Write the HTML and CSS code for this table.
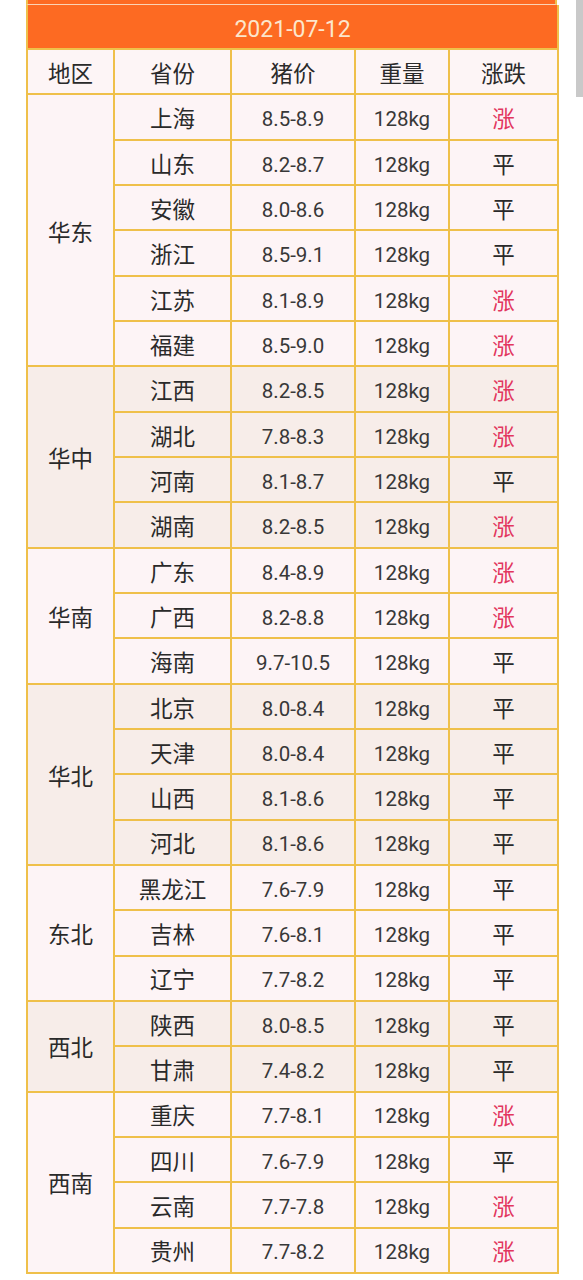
FILE: index.html
```html
<!DOCTYPE html>
<html lang="zh-CN">
<head>
<meta charset="utf-8">
<title>猪价</title>
<link rel="stylesheet" href="styles.css">
</head>
<body>
<div class="wrap">
  <div class="topstrip"></div>
  <table class="price">
    <colgroup>
      <col class="c1"><col class="c2"><col class="c3"><col class="c4"><col class="c5">
    </colgroup>
    <thead>
      <tr class="date-row"><th colspan="5">2021-07-12</th></tr>
      <tr class="head-row"><th>地区</th><th>省份</th><th>猪价</th><th>重量</th><th>涨跌</th></tr>
    </thead>
    <tbody class="g-a">
      <tr><td rowspan="6" class="region">华东</td><td>上海</td><td class="num">8.5-8.9</td><td class="num">128kg</td><td class="up">涨</td></tr>
      <tr><td>山东</td><td class="num">8.2-8.7</td><td class="num">128kg</td><td>平</td></tr>
      <tr><td>安徽</td><td class="num">8.0-8.6</td><td class="num">128kg</td><td>平</td></tr>
      <tr><td>浙江</td><td class="num">8.5-9.1</td><td class="num">128kg</td><td>平</td></tr>
      <tr><td>江苏</td><td class="num">8.1-8.9</td><td class="num">128kg</td><td class="up">涨</td></tr>
      <tr><td>福建</td><td class="num">8.5-9.0</td><td class="num">128kg</td><td class="up">涨</td></tr>
    </tbody>
    <tbody class="g-b">
      <tr><td rowspan="4" class="region">华中</td><td>江西</td><td class="num">8.2-8.5</td><td class="num">128kg</td><td class="up">涨</td></tr>
      <tr><td>湖北</td><td class="num">7.8-8.3</td><td class="num">128kg</td><td class="up">涨</td></tr>
      <tr><td>河南</td><td class="num">8.1-8.7</td><td class="num">128kg</td><td>平</td></tr>
      <tr><td>湖南</td><td class="num">8.2-8.5</td><td class="num">128kg</td><td class="up">涨</td></tr>
    </tbody>
    <tbody class="g-a">
      <tr><td rowspan="3" class="region">华南</td><td>广东</td><td class="num">8.4-8.9</td><td class="num">128kg</td><td class="up">涨</td></tr>
      <tr><td>广西</td><td class="num">8.2-8.8</td><td class="num">128kg</td><td class="up">涨</td></tr>
      <tr><td>海南</td><td class="num">9.7-10.5</td><td class="num">128kg</td><td>平</td></tr>
    </tbody>
    <tbody class="g-b">
      <tr><td rowspan="4" class="region">华北</td><td>北京</td><td class="num">8.0-8.4</td><td class="num">128kg</td><td>平</td></tr>
      <tr><td>天津</td><td class="num">8.0-8.4</td><td class="num">128kg</td><td>平</td></tr>
      <tr><td>山西</td><td class="num">8.1-8.6</td><td class="num">128kg</td><td>平</td></tr>
      <tr><td>河北</td><td class="num">8.1-8.6</td><td class="num">128kg</td><td>平</td></tr>
    </tbody>
    <tbody class="g-a">
      <tr><td rowspan="3" class="region">东北</td><td>黑龙江</td><td class="num">7.6-7.9</td><td class="num">128kg</td><td>平</td></tr>
      <tr><td>吉林</td><td class="num">7.6-8.1</td><td class="num">128kg</td><td>平</td></tr>
      <tr><td>辽宁</td><td class="num">7.7-8.2</td><td class="num">128kg</td><td>平</td></tr>
    </tbody>
    <tbody class="g-b">
      <tr><td rowspan="2" class="region">西北</td><td>陕西</td><td class="num">8.0-8.5</td><td class="num">128kg</td><td>平</td></tr>
      <tr><td>甘肃</td><td class="num">7.4-8.2</td><td class="num">128kg</td><td>平</td></tr>
    </tbody>
    <tbody class="g-a">
      <tr><td rowspan="4" class="region">西南</td><td>重庆</td><td class="num">7.7-8.1</td><td class="num">128kg</td><td class="up">涨</td></tr>
      <tr><td>四川</td><td class="num">7.6-7.9</td><td class="num">128kg</td><td>平</td></tr>
      <tr><td>云南</td><td class="num">7.7-7.8</td><td class="num">128kg</td><td class="up">涨</td></tr>
      <tr><td>贵州</td><td class="num">7.7-8.2</td><td class="num">128kg</td><td class="up">涨</td></tr>
    </tbody>
  </table>
</div>
<div class="scrollbar"></div>
</body>
</html>
```

FILE: styles.css
```css
html, body {
  margin: 0;
  padding: 0;
  background: #ffffff;
}
body {
  font-family: Roboto, "Noto Sans CJK SC", sans-serif;
  color: #333333;
}
.wrap {
  margin-left: 26px;
  width: 531px;
}
.topstrip {
  height: 4px;
  background: #fd6a22;
  border-left: 2px solid #efc04a;
  border-right: 2px solid #efc04a;
  border-bottom: 1px solid #fbd3b5;
}
.price {
  width: 531px;
  border-collapse: collapse;
  table-layout: fixed;
}
.c1 { width: 87px; }
.c2 { width: 117px; }
.c3 { width: 124px; }
.c4 { width: 94px; }
.c5 { width: 109px; }
.price th,
.price td {
  border: 2px solid #efc04a;
  padding: 5px 0 0 0;
  text-align: center;
  vertical-align: middle;
  font-weight: normal;
  font-size: 22.5px;
  line-height: 1;
  font-family: Roboto, "Noto Sans CJK SC", sans-serif;
  color: #2a2a2a;
}
.price td.num {
  font-size: 20.5px;
  color: #383838;
}
.price tr {
  height: 45.33px;
}
.price tr.date-row {
  height: 44px;
}
.date-row th {
  background: #fd6a22;
  color: #fce6cc;
  font-size: 23px;
  border-top: 0;
  padding-top: 6px;
}
.head-row th {
  background: #fdf5f6;
}
.g-a td {
  background: #fdf4f6;
}
.g-b td {
  background: #f7ede9;
}
.price td.up {
  color: #e2365e;
}
.scrollbar {
  position: absolute;
  top: 0;
  right: 0;
  width: 7px;
  height: 97px;
  background: #c9c9c9;
}
```
